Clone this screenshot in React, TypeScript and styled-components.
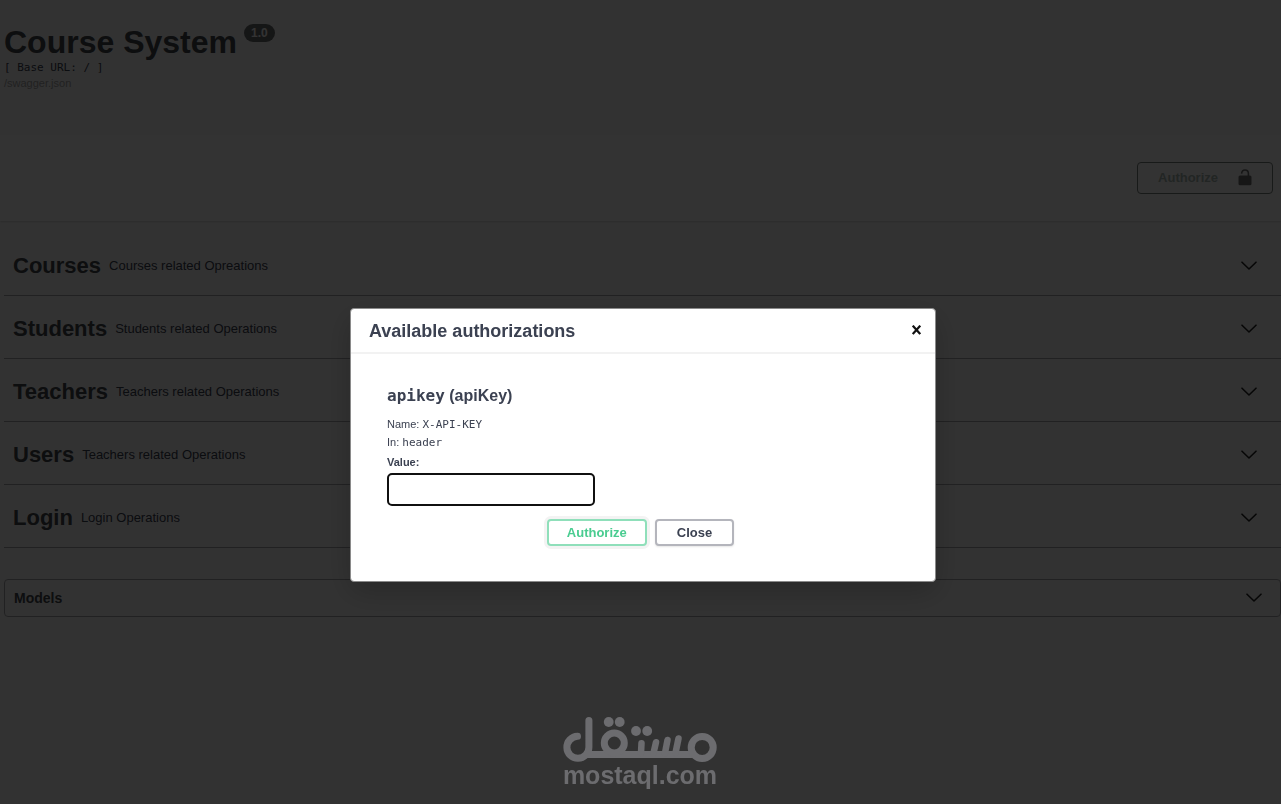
import React from "react";
import styled, { createGlobalStyle } from "styled-components";

const GlobalStyle = createGlobalStyle`
  *, *::before, *::after { box-sizing: border-box; }
  html, body { margin: 0; min-height: 100%; background: #fafafa; }
  body {
    font-family: "Liberation Sans", Arial, sans-serif;
    color: #3b4151;
    overflow: hidden;
  }
  h1, h2, h3, h4, p { margin: 0; }
  button, input { font-family: inherit; }
`;

const MONO = `"DejaVu Sans Mono", monospace`;

const Page = styled.div`
  display: flex;
  flex-direction: column;
  min-height: 100vh;
`;

const Info = styled.header`
  display: flex;
  flex-direction: column;
  align-items: flex-start;
  padding: 24px 4px 44px;
`;

const TitleRow = styled.div`
  display: flex;
  align-items: flex-start;
  gap: 7px;
`;

const Title = styled.h1`
  color: #43454b;
  font-size: 32px;
  line-height: 36px;
`;

const Version = styled.span`
  padding: 0 7px;
  border-radius: 9px;
  background: #6c6d70;
  color: #fff;
  font-size: 12px;
  font-weight: 700;
  line-height: 18px;
`;

const BaseUrl = styled.pre`
  margin: 0;
  font-family: ${MONO};
  font-size: 11px;
  line-height: 15px;
`;

const SpecLink = styled.a`
  color: #a5a5a5;
  font-size: 11px;
  line-height: 16px;
  text-decoration: none;
`;

const SchemeBar = styled.section`
  display: flex;
  justify-content: flex-end;
  padding: 27px 8px;
  background: #fff;
  box-shadow: 0 1px 2px rgba(0, 0, 0, 0.15);
`;

const OpenAuthorize = styled.button`
  display: flex;
  align-items: center;
  gap: 20px;
  height: 32px;
  padding: 0 20px;
  border: 1px solid #78807c;
  border-radius: 4px;
  background: transparent;
  color: #a9b9b2;
  font-size: 13px;
  font-weight: 700;
  line-height: 16px;
`;

const Sections = styled.main`
  display: flex;
  flex-direction: column;
  padding: 12px 0 0 4px;
`;

const SectionRow = styled.section`
  display: flex;
  align-items: center;
  gap: 8px;
  height: 63px;
  padding: 4px 24px 0 9px;
  border-bottom: 1px solid #a6a7ab;
`;

const SectionTitle = styled.h2`
  color: #43454b;
  font-size: 22px;
  line-height: 28px;
`;

const SectionText = styled.p`
  flex: 1;
  font-size: 13px;
  line-height: 16px;
`;

const Toggle = styled.button`
  display: flex;
  padding: 0;
  border: 0;
  background: transparent;
  color: #222;
`;

const Models = styled.section`
  display: flex;
  align-items: center;
  justify-content: space-between;
  height: 38px;
  margin-top: 31px;
  padding: 0 18px 0 9px;
  border: 1px solid #a6a7ab;
  border-radius: 4px;
`;

const ModelsTitle = styled.h3`
  color: #43454b;
  font-size: 14px;
  line-height: 20px;
`;

const Backdrop = styled.div`
  position: fixed;
  inset: 0;
  display: flex;
  flex-direction: column;
  align-items: center;
  justify-content: space-between;
  padding: 308px 0 17px 5px;
  background: rgba(0, 0, 0, 0.8);
`;

const Dialog = styled.div`
  width: 100%;
  max-width: 586px;
  border: 1px solid #8a8a8a;
  border-radius: 4px;
  background: #fff;
  box-shadow: 0 10px 30px rgba(0, 0, 0, 0.2);
`;

const DialogHeader = styled.div`
  display: flex;
  align-items: center;
  justify-content: space-between;
  height: 45px;
  padding: 0 14px 0 18px;
  border-bottom: 2px solid #f2f2f2;
`;

const DialogTitle = styled.h2`
  font-size: 18px;
  line-height: 24px;
`;

const DialogBody = styled.form`
  display: flex;
  flex-direction: column;
  align-items: flex-start;
  padding: 30px 36px 35px;
`;

const SchemeName = styled.h3`
  margin-bottom: 7px;
  font-size: 16px;
  line-height: 24px;
`;

const Detail = styled.p`
  font-size: 11px;
  line-height: 18px;
`;

const Code = styled.code`
  font-family: ${MONO};
  line-height: 1;
`;

const ValueLabel = styled.label`
  font-size: 11px;
  font-weight: 700;
  line-height: 22px;
`;

const ValueInput = styled.input`
  width: 208px;
  height: 33px;
  padding: 0 9px;
  border: 2px solid #101010;
  border-radius: 5px;
  outline: 0;
  background: #fff;
  font-size: 13px;
`;

const Actions = styled.div`
  display: flex;
  align-self: center;
  gap: 8px;
  margin-top: 13px;
  padding-right: 5px;
`;

const ActionButton = styled.button<{ $primary?: boolean }>`
  height: 27px;
  padding: 0 ${(p) => (p.$primary ? "18px" : "20px")};
  border: 2px solid ${(p) => (p.$primary ? "#8fdfba" : "#b4b5bc")};
  border-radius: 4px;
  background: #fff;
  box-shadow: ${(p) =>
    p.$primary ? "0 0 0 3px #f3f3f3" : "0 1px 2px rgba(0, 0, 0, 0.1)"};
  color: ${(p) => (p.$primary ? "#49cc90" : "#3b4151")};
  font-size: 13px;
  font-weight: 700;
  line-height: 16px;
`;

const Brand = styled.div`
  display: flex;
  flex-direction: column;
  align-items: center;
  padding-right: 6px;
  color: #6c6c6f;
`;

const BrandName = styled.span`
  font-size: 25px;
  font-weight: 700;
  line-height: 24px;
`;

const Chevron = () => (
  <svg width="16" height="10" viewBox="0 0 16 10" aria-hidden="true">
    <path d="M1 1.2 8 8l7-6.8" fill="none" stroke="currentColor" strokeWidth="1.6" strokeLinejoin="round" strokeLinecap="round" />
  </svg>
);

const UnlockedIcon = () => (
  <svg width="14" height="18" viewBox="0 0 14 18" aria-hidden="true">
    <path d="M3.6 4.6C3.8 2.4 5 1 7 1s3.4 1.4 3.4 3.6V8" fill="none" stroke="#707070" strokeWidth="1.6" />
    <rect x="0.5" y="6.5" width="13" height="9.8" rx="1.5" fill="#707070" />
  </svg>
);

const CloseIcon = () => (
  <svg width="9" height="12" viewBox="0 0 9 12" aria-hidden="true">
    <path d="M1.5 1.5 7.5 8.3M7.5 1.5 1.5 8.3" stroke="#111" strokeWidth="2.2" strokeLinecap="square" />
  </svg>
);

const BrandMark = () => (
  <svg width="156" height="46" viewBox="562 717 156 46" role="img" aria-label="Mostaql">
    <g fill="none" stroke="currentColor" strokeWidth="7" strokeLinecap="round">
      <path d="M577.5 736.3A11 11 0 1 0 588.9 747.3V720.5" />
      <path d="M587 754.4H694" strokeLinecap="butt" />
      <circle cx="702.2" cy="747.4" r="11" />
      <circle cx="614.3" cy="743" r="10" />
      <path d="M641.5 743.2 641 753M656 742.2 653.5 753M667.5 740 665 753M678.5 738.5 675.5 753" strokeWidth="6.5" />
    </g>
    <g fill="currentColor">
      <circle cx="608.7" cy="722" r="4.9" />
      <circle cx="619.7" cy="722" r="4.9" />
      <circle cx="636" cy="731" r="4.9" />
      <circle cx="647.2" cy="731" r="4.9" />
    </g>
  </svg>
);

const sections = [
  { name: "Courses", text: "Courses related Opreations" },
  { name: "Students", text: "Students related Operations" },
  { name: "Teachers", text: "Teachers related Operations" },
  { name: "Users", text: "Teachers related Operations" },
  { name: "Login", text: "Login Operations" },
];

export default function App() {
  return (
    <>
      <GlobalStyle />
      <Page>
        <Info>
          <TitleRow>
            <Title>Course System</Title>
            <Version>1.0</Version>
          </TitleRow>
          <BaseUrl>[ Base URL: / ]</BaseUrl>
          <SpecLink href="/swagger.json">/swagger.json</SpecLink>
        </Info>
        <SchemeBar>
          <OpenAuthorize type="button">
            Authorize
            <UnlockedIcon />
          </OpenAuthorize>
        </SchemeBar>
        <Sections>
          {sections.map((s) => (
            <SectionRow key={s.name}>
              <SectionTitle>{s.name}</SectionTitle>
              <SectionText>{s.text}</SectionText>
              <Toggle type="button" aria-label={`Expand ${s.name}`}>
                <Chevron />
              </Toggle>
            </SectionRow>
          ))}
          <Models>
            <ModelsTitle>Models</ModelsTitle>
            <Toggle type="button" aria-label="Expand models">
              <Chevron />
            </Toggle>
          </Models>
        </Sections>
      </Page>
      <Backdrop>
        <Dialog role="dialog" aria-modal="true" aria-labelledby="auth-title">
          <DialogHeader>
            <DialogTitle id="auth-title">Available authorizations</DialogTitle>
            <Toggle type="button" aria-label="Close dialog">
              <CloseIcon />
            </Toggle>
          </DialogHeader>
          <DialogBody onSubmit={(e) => e.preventDefault()}>
            <SchemeName>
              <Code>apikey</Code> (apiKey)
            </SchemeName>
            <Detail>
              Name: <Code>X-API-KEY</Code>
            </Detail>
            <Detail>
              In: <Code>header</Code>
            </Detail>
            <ValueLabel htmlFor="api-key-value">Value:</ValueLabel>
            <ValueInput id="api-key-value" type="text" />
            <Actions>
              <ActionButton type="submit" $primary>
                Authorize
              </ActionButton>
              <ActionButton type="button">Close</ActionButton>
            </Actions>
          </DialogBody>
        </Dialog>
        <Brand>
          <BrandMark />
          <BrandName>mostaql.com</BrandName>
        </Brand>
      </Backdrop>
    </>
  );
}
